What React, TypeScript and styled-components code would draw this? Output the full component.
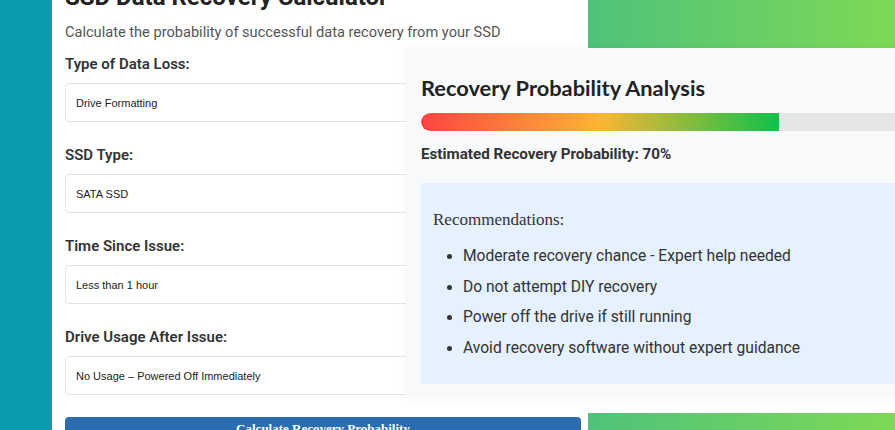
import React from 'react';
import styled, { createGlobalStyle } from 'styled-components';

const GlobalStyle = createGlobalStyle`
  html, body {
    margin: 0;
    padding: 0;
    overflow: hidden;
    background: #ffffff;
  }
  * {
    box-sizing: border-box;
  }
`;

const Page = styled.div`
  position: relative;
  display: flex;
  width: 895px;
  height: 430px;
  overflow: hidden;
  font-family: Roboto, "Liberation Sans", sans-serif;
  color: #333;
`;

const Sidebar = styled.div`
  width: 52px;
  flex-shrink: 0;
  background: #0b9bb0;
`;

const Main = styled.main`
  flex: 1;
  display: flex;
  gap: 7px;
  padding-left: 13px;
  background: #ffffff;
`;

const FormColumn = styled.section`
  width: 516px;
  display: flex;
  flex-direction: column;
`;

// page is scrolled a little, so the heading sits partly above the top edge
const Title = styled.h1`
  margin: -17px 0 0;
  font-size: 24px;
  line-height: 29px;
  font-weight: 700;
  color: #222;
`;

const Subtitle = styled.p`
  margin: 9px 0 11px;
  font-size: 14.6px;
  line-height: 22px;
  color: #555;
`;

const Field = styled.div`
  display: flex;
  flex-direction: column;
  gap: 9px;
  margin-bottom: 23px;
`;

const Label = styled.label`
  font-size: 15px;
  line-height: 20px;
  font-weight: 600;
  color: #333;
`;

const Select = styled.select`
  appearance: none;
  width: 100%;
  height: 39px;
  padding: 0 10px;
  border: 1px solid #e4e4e4;
  border-radius: 4px;
  background: #ffffff;
  font-family: "Liberation Sans", Arial, sans-serif;
  font-size: 11px;
  color: #222;
`;

const SubmitButton = styled.button`
  margin-top: -1px;
  width: 100%;
  height: 40px;
  border: none;
  border-radius: 4px;
  background: #2a6db0;
  color: #ffffff;
  font-family: "Liberation Serif", serif;
  font-size: 13px;
  font-weight: 700;
  text-align: center;
  padding: 4px 0 0;
  align-self: stretch;
`;

const Aside = styled.aside`
  width: 307px;
  flex-shrink: 0;
  display: flex;
  flex-direction: column;
  justify-content: space-between;
`;

const GreenCard = styled.div<{ $height: number }>`
  height: ${(p) => p.$height}px;
  background: linear-gradient(90deg, #50c27a, #7dd956);
`;

const ResultPanel = styled.section`
  position: absolute;
  left: 406px;
  top: 48px;
  width: 541px;
  height: 350px;
  padding: 27px 15px 14px;
  background: #f7f9fb;
  box-shadow: 0 0 10px rgba(0, 0, 0, 0.04);
`;

const ResultTitle = styled.h2`
  margin: 0 0 13px;
  font-family: Lato, "Open Sans", sans-serif;
  font-size: 21.8px;
  line-height: 25px;
  font-weight: 700;
  color: #222;
`;

const Track = styled.div`
  height: 18px;
  border-radius: 9px;
  background: #e6e6e6;
  overflow: hidden;
`;

const Fill = styled.div`
  height: 100%;
  border-radius: 9px 0 0 9px;
  background: linear-gradient(90deg, #ff4343, #fbb632 50%, #0dc24b);
`;

const Estimate = styled.p`
  margin: 13px 0 19px;
  font-size: 15.2px;
  line-height: 20px;
  font-weight: 700;
  color: #333;
`;

const RecBox = styled.div`
  height: 201px;
  padding: 25px 12px 0;
  background: #e5f1fd;
`;

const RecTitle = styled.h4`
  margin: 0 0 13px;
  font-family: "Liberation Serif", serif;
  font-size: 17px;
  line-height: 24px;
  font-weight: 400;
  color: #333;
`;

const RecList = styled.ul`
  margin: 0;
  padding-left: 30px;
`;

const RecItem = styled.li`
  font-size: 15.6px;
  line-height: 22px;
  margin-bottom: 8.5px;
  color: #333;
`;

const fields = [
  { id: 'loss', label: 'Type of Data Loss:', value: 'Drive Formatting' },
  { id: 'type', label: 'SSD Type:', value: 'SATA SSD' },
  { id: 'time', label: 'Time Since Issue:', value: 'Less than 1 hour' },
  { id: 'usage', label: 'Drive Usage After Issue:', value: 'No Usage – Powered Off Immediately' },
];

const recommendations = [
  'Moderate recovery chance - Expert help needed',
  'Do not attempt DIY recovery',
  'Power off the drive if still running',
  'Avoid recovery software without expert guidance',
];

const probability = 70;

const App: React.FC = () => {
  return (
    <>
      <GlobalStyle />
      <Page>
        <Sidebar />
        <Main>
          <FormColumn>
            <Title>SSD Data Recovery Calculator</Title>
            <Subtitle>Calculate the probability of successful data recovery from your SSD</Subtitle>
            {fields.map((f) => (
              <Field key={f.id}>
                <Label htmlFor={f.id}>{f.label}</Label>
                <Select id={f.id} defaultValue={f.value}>
                  <option>{f.value}</option>
                </Select>
              </Field>
            ))}
            <SubmitButton type="button">Calculate Recovery Probability</SubmitButton>
          </FormColumn>
          <Aside>
            <GreenCard $height={48} />
            <GreenCard $height={17} />
          </Aside>
        </Main>
        <ResultPanel>
          <ResultTitle>Recovery Probability Analysis</ResultTitle>
          <Track>
            <Fill style={{ width: `${probability}%` }} />
          </Track>
          <Estimate>Estimated Recovery Probability: {probability}%</Estimate>
          <RecBox>
            <RecTitle>Recommendations:</RecTitle>
            <RecList>
              {recommendations.map((r) => (
                <RecItem key={r}>{r}</RecItem>
              ))}
            </RecList>
          </RecBox>
        </ResultPanel>
      </Page>
    </>
  );
};

export default App;
